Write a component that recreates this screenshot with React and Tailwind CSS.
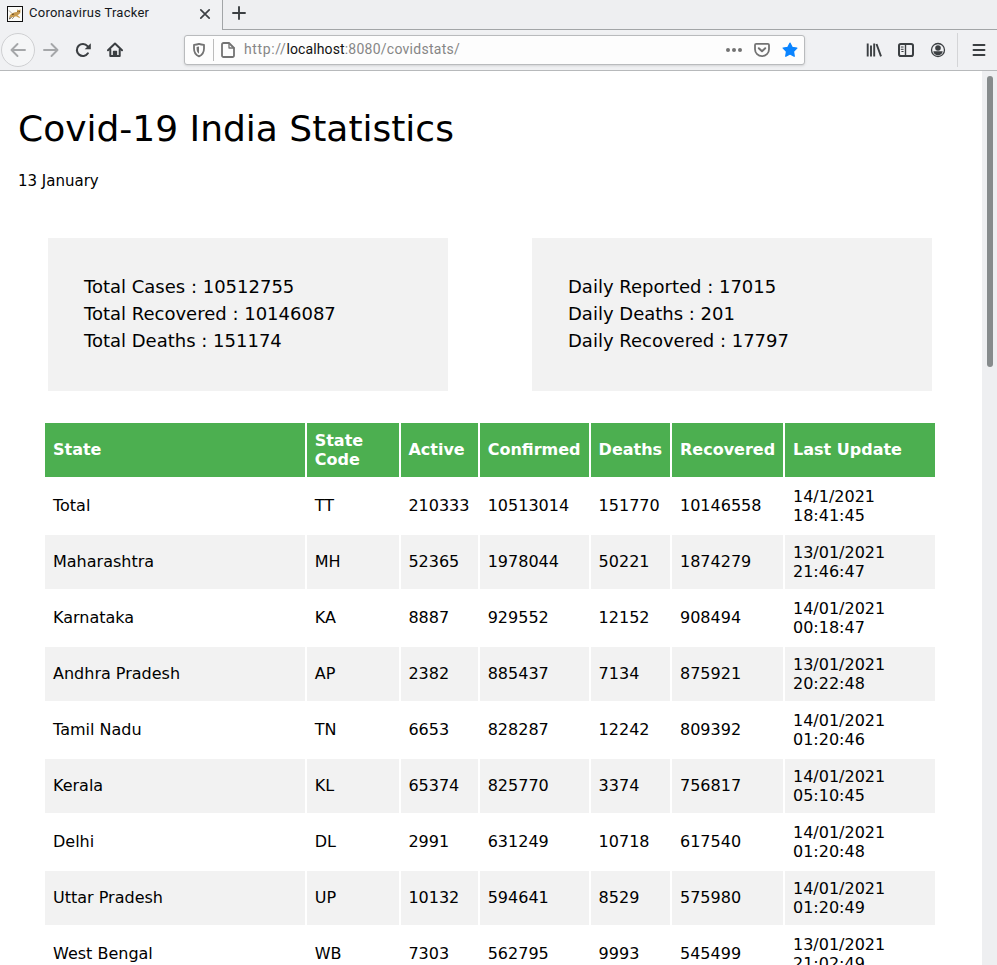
const HEADERS = ["State", "State Code", "Active", "Confirmed", "Deaths", "Recovered", "Last Update"];

const ROWS = [
  ["Total", "TT", "210333", "10513014", "151770", "10146558", "14/1/2021 18:41:45"],
  ["Maharashtra", "MH", "52365", "1978044", "50221", "1874279", "13/01/2021 21:46:47"],
  ["Karnataka", "KA", "8887", "929552", "12152", "908494", "14/01/2021 00:18:47"],
  ["Andhra Pradesh", "AP", "2382", "885437", "7134", "875921", "13/01/2021 20:22:48"],
  ["Tamil Nadu", "TN", "6653", "828287", "12242", "809392", "14/01/2021 01:20:46"],
  ["Kerala", "KL", "65374", "825770", "3374", "756817", "14/01/2021 05:10:45"],
  ["Delhi", "DL", "2991", "631249", "10718", "617540", "14/01/2021 01:20:48"],
  ["Uttar Pradesh", "UP", "10132", "594641", "8529", "575980", "14/01/2021 01:20:49"],
  ["West Bengal", "WB", "7303", "562795", "9993", "545499", "13/01/2021 21:02:49"],
];

const GRID = "grid grid-cols-[260px_92px_77px_109px_79px_111px_150px] gap-x-[2px]";

const PAD = ["pl-2", "pl-[7.7px]", "pl-[7.4px]", "pl-[7.7px]", "pl-[7.6px]", "pl-2", "pl-2 pr-10"];

function Icon({ children, className = "", size = 16 }) {
  return (
    <svg
      width={size}
      height={size}
      viewBox="0 0 16 16"
      fill="none"
      stroke="currentColor"
      strokeWidth="2"
      strokeLinecap="round"
      strokeLinejoin="round"
      className={"block shrink-0 " + className}
    >
      {children}
    </svg>
  );
}

function Favicon() {
  return (
    <svg width="16" height="16" viewBox="0 0 16 16" className="block shrink-0">
      <rect x="0.5" y="0.5" width="15" height="15" fill="#fbfbf8" stroke="#111" />
      <path d="M2 4.5l2.500 2.500M2 12l3-2 2 1-2 2" stroke="#8b8575" strokeWidth="0.800" fill="none" />
      <path d="M2 10.500l2.500-3L8 6.200l2-.2.300-2.800L11.200 4h1l1.300-.8-.2 3.800-1.500 1.500-1.300.7 2.500 2-.5.800-3.500-1.700-2 .7-2.500.2z" fill="#c89a4e" />
      <path d="M10.500 5.500h.8M12.300 5.500h.7M5 8.500l2-.5M2 13l2.500-1.500" stroke="#4f3c22" strokeWidth="0.900" />
    </svg>
  );
}

function TabBar() {
  return (
    <div className="flex h-[30px] bg-[#f0f1f3]">
      <div className="flex w-[222px] items-center pb-[3px] pl-[7px]">
        <Favicon />
        <span className="ml-[6px] w-[165px] whitespace-nowrap pb-[2px] text-[13px] leading-4 tracking-[0.250px] text-[#15181c]">
          Coronavirus Tracker
        </span>
        <svg width="12" height="12" viewBox="0 0 12 12" className="ml-[5px] block" stroke="#3d4145" strokeWidth="1.700" strokeLinecap="round">
          <path d="M1.800 1.800l8.400 8.400M10.200 1.800l-8.400 8.400" />
        </svg>
      </div>
      <div className="flex-1 border-b border-l border-[#a2a5a7] bg-[#eeeff1] pl-[9px] pt-[6px]">
        <svg width="14" height="14" viewBox="0 0 14 14" className="block" stroke="#3b3f42" strokeWidth="1.900" strokeLinecap="round">
          <path d="M7 1v12M1 7h12" />
        </svg>
      </div>
    </div>
  );
}

function AddressBar() {
  return (
    <div className="ml-[61px] flex h-[30px] w-[621px] shrink-0 items-center rounded-[3px] border border-[#b9bbbd] bg-[#fdfdfd] shadow-sm">
      <Icon className="ml-[6px] text-[#737373]">
        <path d="M8 1.800c1.700.7 3.200.9 5 1v3.700c0 3.800-1.700 6.500-5 7.900-3.300-1.400-5-4.100-5-7.900V2.800c1.800-.1 3.300-.3 5-1z" strokeWidth="1.800" />
        <path d="M8 4.500c-.8.300-1.600.5-2.400.6v1.600c0 2.300.8 3.900 2.400 5z" fill="currentColor" stroke="none" />
      </Icon>
      <div className="ml-[6px] h-[22px] w-px shrink-0 bg-[#bcbcbc]" />
      <Icon className="ml-[6px] text-[#737373]">
        <path d="M3.500 1h5.500l5 5v7.500a1.500 1.500 0 0 1-1.500 1.500h-9A1.500 1.500 0 0 1 2 13.500v-11A1.500 1.500 0 0 1 3.500 1z" strokeWidth="1.800" />
        <path d="M9 1.500V6h5" strokeWidth="1.300" />
      </Icon>
      <span className="ml-2 w-[480px] shrink-0 whitespace-nowrap pb-[2px] text-[14px] leading-5 tracking-[0.260px] text-[#868686]">
        <span className="tracking-[0.620px]">http://</span>
        <span className="tracking-[0.100px] text-[#101010]">localhost</span>:8080/covidstats/
      </span>
      <Icon className="ml-[2px] text-[#737373]">
        <g fill="currentColor" stroke="none">
          <circle cx="2" cy="8" r="2" />
          <circle cx="8" cy="8" r="2" />
          <circle cx="14" cy="8" r="2" />
        </g>
      </Icon>
      <Icon className="ml-3 text-[#737373]">
        <path d="M2.200 1.800h11.600c.7 0 1.200.5 1.200 1.200v4.200a7 7 0 0 1-14 0V3c0-.7.500-1.200 1.200-1.200z" strokeWidth="1.800" />
        <path d="M4.800 6.300L8 9.300l3.200-3" />
      </Icon>
      <Icon className="ml-3 text-[#0a84ff]">
        <path d="M8 1.200l2.100 4.200 4.700.7-3.400 3.300.8 4.800L8 12l-4.200 2.200.8-4.800L1.200 6.100l4.700-.7z" fill="currentColor" strokeWidth="1.400" />
      </Icon>
    </div>
  );
}

function Toolbar() {
  return (
    <div className="flex h-[41px] items-center border-b border-[#b7b9bb] bg-[#f0f1f3] text-[#3b3f42]">
      <div className="ml-px flex size-[34px] shrink-0 items-center justify-center rounded-full border border-[#cfd0d2] bg-[#f5f6f7] text-[#a5a7a9]">
        <Icon>
          <path d="M15 8H1.500M7.500 2L1.500 8l6 6" strokeWidth="1.900" />
        </Icon>
      </div>
      <Icon className="ml-2 text-[#a5a7a9]">
        <path d="M1 8h13.500M8.500 2l6 6-6 6" strokeWidth="1.900" />
      </Icon>
      <Icon className="ml-4">
        <path d="M12.900 11.300A6 6 0 1 1 12.500 4.200" strokeWidth="2.100" />
        <path d="M15.800 1.200V7.300H9.700z" fill="currentColor" stroke="none" />
      </Icon>
      <Icon className="ml-4">
        <path d="M1 8.300L8 1.500l7 6.800" />
        <path d="M3.300 7.500V14h9.400V7.500" />
        <path d="M6.500 15V9.500h3V15z" fill="currentColor" stroke="none" />
        <path d="M6.500 14V9.300h3V14" strokeWidth="1.300" />
      </Icon>
      <AddressBar />
      <Icon className="ml-[61px]">
        <path d="M1.700 1.500v13M5 3.500v11M8.200 1.500v13M10.500 2l4.500 12.300" strokeWidth="1.900" strokeLinecap="butt" />
      </Icon>
      <Icon className="ml-4">
        <rect x="1" y="2" width="14" height="12" rx="1.800" />
        <path d="M7.500 2v12" strokeWidth="1.400" />
        <path d="M3.200 5h2M3.200 7.300h2M3.800 9.500h1.400" strokeWidth="1" />
      </Icon>
      <Icon className="ml-4">
        <circle cx="8" cy="8" r="6.500" strokeWidth="1.300" />
        <circle cx="8" cy="6" r="2.800" fill="currentColor" stroke="none" />
        <path d="M3.300 9.300h9.400c-.3 2.400-2.300 4-4.700 4s-4.400-1.600-4.700-4z" fill="currentColor" stroke="none" />
      </Icon>
      <div className="ml-[11px] h-[34px] w-px bg-[#d4d5d7]" />
      <Icon className="ml-[13px]">
        <path d="M2.500 3h11M2.500 8h11M2.500 13h11" strokeWidth="1.900" />
      </Icon>
    </div>
  );
}

function Card({ lines }) {
  return (
    <div className="h-[153px] w-[400px] bg-[#f2f2f2] px-9 py-[35px] text-[18px] leading-[27px]">
      {lines.map((line) => (
        <p key={line}>{line}</p>
      ))}
    </div>
  );
}

function StatsTable() {
  return (
    <div className="ml-[27px] mt-8 flex flex-col gap-[2px] text-[16px] leading-[19px]">
      <div className={GRID}>
        {HEADERS.map((h, j) => (
          <div key={h} className={"flex h-[54px] items-center bg-[#4caf50] pb-px font-bold text-white " + (j === 1 ? "pl-[7.7px] pr-8" : j === 6 ? "pl-2" : PAD[j])}>
            {h}
          </div>
        ))}
      </div>
      {ROWS.map((row, i) => (
        <div key={row[0]} className={GRID}>
          {row.map((cell, j) => (
            <div key={j} className={"flex h-[54px] items-center pb-px " + PAD[j] + (i % 2 ? " bg-[#f2f2f2]" : " bg-white")}>
              {cell}
            </div>
          ))}
        </div>
      ))}
    </div>
  );
}

export default function App() {
  return (
    <div className="flex h-[965px] w-[997px] flex-col overflow-hidden bg-white">
      <header className="shrink-0 font-['Roboto',sans-serif]">
        <TabBar />
        <Toolbar />
      </header>
      <div className="flex min-h-0 flex-1">
        <main className="w-[982px] overflow-hidden pl-[18px] font-['DejaVu_Sans',sans-serif] text-black">
          <h1 className="mt-[31px] text-[36px] leading-[54px]">Covid-19 India Statistics</h1>
          <p className="mt-[14px] text-[15px] leading-[22px]">13 January</p>
          <div className="ml-[30px] mt-[46px] flex gap-[84px]">
            <Card lines={["Total Cases : 10512755", "Total Recovered : 10146087", "Total Deaths : 151174"]} />
            <Card lines={["Daily Reported : 17015", "Daily Deaths : 201", "Daily Recovered : 17797"]} />
          </div>
          <StatsTable />
        </main>
        <div className="w-[15px] bg-[#eeeff1] pl-[5px] pt-[5px]">
          <div className="h-[291px] w-[6px] rounded-full bg-[#868b8c]" />
        </div>
      </div>
    </div>
  );
}
